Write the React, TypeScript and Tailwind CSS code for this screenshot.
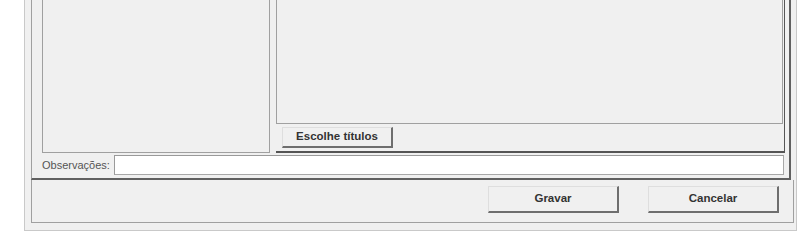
import React from "react";

const font = { fontFamily: '"Liberation Sans", Arial, sans-serif' };

function RaisedButton({ label, className }: { label: string; className: string }) {
  return (
    <button
      className={`flex items-center justify-center bg-[#f0f0f0] border-t border-l border-t-[#dedede] border-l-[#dedede] border-r-2 border-b-2 border-r-[#6e6e6e] border-b-[#6e6e6e] text-[11.5px] font-bold text-[#333] ${className}`}
    >
      {label}
    </button>
  );
}

export default function App() {
  return (
    <div className="w-[800px] h-[231px] bg-white flex overflow-hidden" style={font}>
      <div className="ml-[24px] w-[773px] h-[231px] bg-[#f0f0f0] border-l border-r border-b border-[#c9c9c9]">
        <div className="pl-[6px] pr-[2px]">
          {/* Upper group */}
          <div className="w-[760px] h-[180px] border-l border-[#a0a0a0] border-r-2 border-b-2 border-r-[#606060] border-b-[#606060]">
            <div className="flex items-start pl-[10px]">
              {/* Left list */}
              <div className="w-[228px] h-[153px] border-l border-r border-b border-[#a0a0a0] bg-[#f0f0f0]" />

              {/* Right area */}
              <div className="ml-[6px] w-[509px] h-[153px] flex flex-col border-r border-r-[#555] border-b-2 border-b-[#555]">
                <div className="h-[124px] mr-[1px] border-l border-r border-b border-[#a0a0a0] bg-[#f0f0f0]" />
                <div className="flex-1 pl-[6px] pt-[3px]">
                  <RaisedButton label="Escolhe títulos" className="w-[111px] h-[21px]" />
                </div>
              </div>
            </div>

            {/* Observações row */}
            <div className="flex items-center pl-[10px] mt-[2px]">
              <span className="w-[72px] text-[11px] text-[#555]">Observações:</span>
              <div className="w-[670px] h-[20px] bg-white border border-[#a8a8a8] border-t-[#9a9a9a] border-l-[#9a9a9a]" />
            </div>
          </div>

          {/* Bottom bar */}
          <div className="h-[43px] border-l border-r border-b border-[#a0a0a0] flex justify-end items-start gap-[29px] pt-[6px] pr-[14px]">
            <RaisedButton label="Gravar" className="w-[131px] h-[27px]" />
            <RaisedButton label="Cancelar" className="w-[131px] h-[27px]" />
          </div>
        </div>
      </div>
    </div>
  );
}
